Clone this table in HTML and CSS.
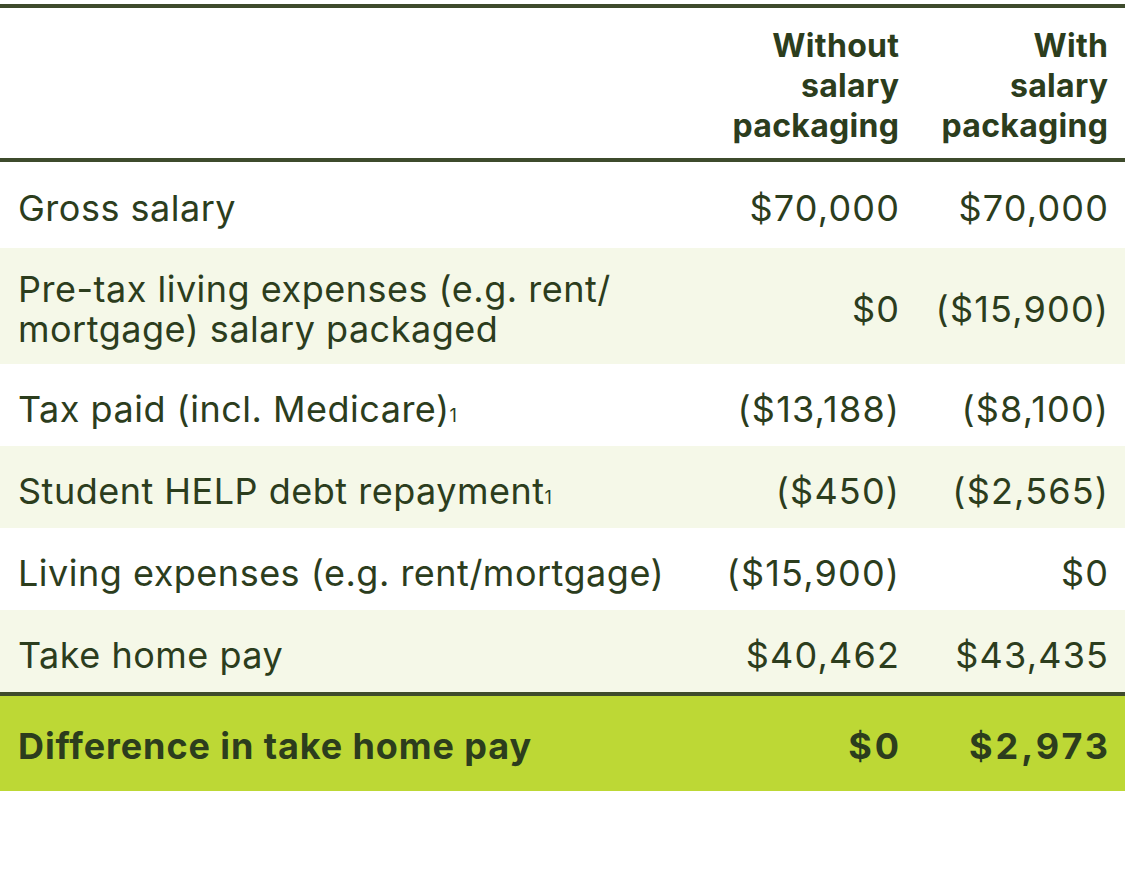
FILE: index.html
```html
<!DOCTYPE html>
<html>
<head>
<meta charset="utf-8">
<link rel="stylesheet" href="styles.css">
</head>
<body>
<div class="table">
  <div class="row head">
    <div class="cell label"></div>
    <div class="cell num">Without<br>salary<br>packaging</div>
    <div class="cell num">With<br>salary<br>packaging</div>
  </div>
  <div class="row first">
    <div class="cell label">Gross salary</div>
    <div class="cell num">$70,000</div>
    <div class="cell num">$70,000</div>
  </div>
  <div class="row alt two">
    <div class="cell label">Pre-tax living expenses (e.g. rent/<br>mortgage) salary packaged</div>
    <div class="cell num">$0</div>
    <div class="cell num">($15,900)</div>
  </div>
  <div class="row">
    <div class="cell label">Tax paid (incl. Medicare)<span class="note">1</span></div>
    <div class="cell num">($13,188)</div>
    <div class="cell num">($8,100)</div>
  </div>
  <div class="row alt">
    <div class="cell label">Student HELP debt repayment<span class="note">1</span></div>
    <div class="cell num">($450)</div>
    <div class="cell num">($2,565)</div>
  </div>
  <div class="row">
    <div class="cell label">Living expenses (e.g. rent/mortgage)</div>
    <div class="cell num">($15,900)</div>
    <div class="cell num">$0</div>
  </div>
  <div class="row alt">
    <div class="cell label">Take home pay</div>
    <div class="cell num">$40,462</div>
    <div class="cell num">$43,435</div>
  </div>
  <div class="row total">
    <div class="cell label">Difference in take home pay</div>
    <div class="cell num">$0</div>
    <div class="cell num">$2,973</div>
  </div>
</div>
</body>
</html>
```
FILE: styles.css
```css
html, body {
  margin: 0;
  padding: 0;
  background: #ffffff;
}
body {
  padding-top: 4px;
  font-family: Inter, "Liberation Sans", Arial, sans-serif;
  color: #2c3d1d;
}
.table {
  border-top: 4px solid #3e4b2c;
}
.row {
  display: grid;
  grid-template-columns: 1fr 208px 208px;
  align-items: center;
  font-size: 36px;
  line-height: 40px;
  padding: 25px 0 17px;
}
.row.first {
  padding: 26px 0 20px;
}
.row.two {
  padding: 21px 0 15px;
}
.row.alt {
  background: #f5f8e8;
}
.cell.label {
  padding-left: 18px;
  letter-spacing: 0.5px;
}
.cell.num {
  text-align: right;
  letter-spacing: 1.2px;
  padding-right: 16.8px;
}
.cell.num:last-child {
  padding-right: 15.8px;
}
.head {
  font-weight: 700;
  font-size: 32px;
  padding: 18px 0 12px;
  border-bottom: 4px solid #3e4b2c;
}
.head .cell.num {
  letter-spacing: 0.3px;
  padding-right: 17.7px;
}
.head .cell.num:last-child {
  padding-right: 16.7px;
}
.note {
  font-size: 18px;
  line-height: 1;
  letter-spacing: 0;
}
.total {
  background: #bdd835;
  border-top: 4px solid #3e4b2c;
  font-weight: 700;
  padding: 30px 0 25px;
}
.total .cell.label {
  letter-spacing: 0.9px;
}
.total .cell.num {
  letter-spacing: 3px;
  padding-right: 15px;
}
.total .cell.num:last-child {
  padding-right: 14px;
}
```
